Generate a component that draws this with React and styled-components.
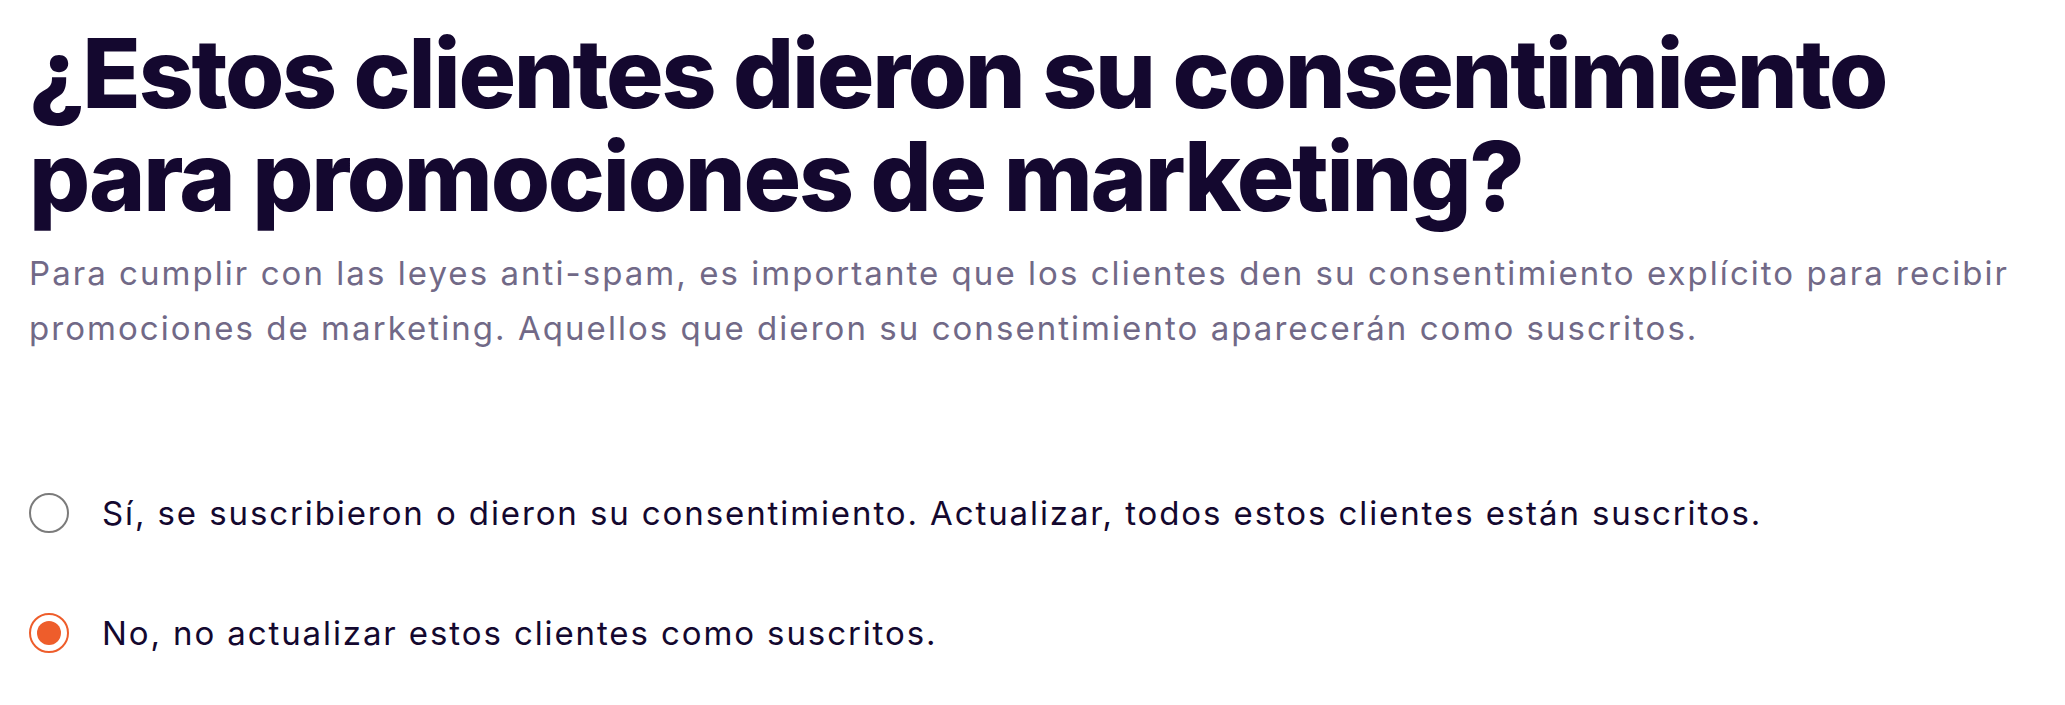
import React, { useState } from "react";
import styled, { createGlobalStyle } from "styled-components";

const GlobalStyle = createGlobalStyle`
  html, body {
    margin: 0;
    padding: 0;
    background: #ffffff;
  }
  body {
    font-family: Inter, "Noto Sans", "Liberation Sans", sans-serif;
    -webkit-font-smoothing: antialiased;
  }
`;

const Page = styled.main`
  box-sizing: border-box;
  width: 100%;
  padding: 22px 29px 40px 29px;
`;

const Heading = styled.h1`
  margin: 0;
  font-family: Inter, "Liberation Sans", sans-serif;
  font-weight: 800;
  font-size: 96px;
  line-height: 103px;
  letter-spacing: -2.25px;
  color: #14082f;
`;

const Lead = styled.p`
  margin: 18px 0 0 0;
  font-family: Inter, "Liberation Sans", sans-serif;
  font-weight: 400;
  font-size: 33px;
  line-height: 55px;
  letter-spacing: 2.05px;
  color: #716987;
`;

const RadioGroup = styled.div`
  display: flex;
  flex-direction: column;
  gap: 80px;
  margin-top: 137px;
`;

const Option = styled.label`
  display: flex;
  align-items: center;
  gap: 33px;
  cursor: pointer;
`;

const HiddenInput = styled.input`
  position: absolute;
  opacity: 0;
  width: 0;
  height: 0;
`;

const Mark = styled.span`
  box-sizing: border-box;
  flex: none;
  width: 40px;
  height: 40px;
  border-radius: 50%;
  border: 2px solid ${(p) => (p.$checked ? "#ee5d2b" : "#7b7b7b")};
  display: flex;
  align-items: center;
  justify-content: center;

  &::after {
    content: "";
    width: 24px;
    height: 24px;
    border-radius: 50%;
    background: #ee5d2b;
    display: ${(p) => (p.$checked ? "block" : "none")};
  }
`;

const OptionText = styled.span`
  font-family: Inter, "Liberation Sans", sans-serif;
  font-size: 33px;
  line-height: 40px;
  letter-spacing: 1.9px;
  color: #14082f;
`;

const options = [
  {
    id: "yes",
    label:
      "Sí, se suscribieron o dieron su consentimiento. Actualizar, todos estos clientes están suscritos.",
  },
  { id: "no", label: "No, no actualizar estos clientes como suscritos." },
];

export default function App() {
  const [value, setValue] = useState("no");
  return (
    <>
      <GlobalStyle />
      <Page>
        <Heading>¿Estos clientes dieron su consentimiento para promociones de marketing?</Heading>
        <Lead>
          Para cumplir con las leyes anti-spam, es importante que los clientes den su
          consentimiento explícito para recibir promociones de marketing. Aquellos que
          dieron su consentimiento aparecerán como suscritos.
        </Lead>
        <RadioGroup role="radiogroup">
          {options.map((o) => (
            <Option key={o.id}>
              <HiddenInput
                type="radio"
                name="consent"
                value={o.id}
                checked={value === o.id}
                onChange={() => setValue(o.id)}
              />
              <Mark $checked={value === o.id} />
              <OptionText>{o.label}</OptionText>
            </Option>
          ))}
        </RadioGroup>
      </Page>
    </>
  );
}
